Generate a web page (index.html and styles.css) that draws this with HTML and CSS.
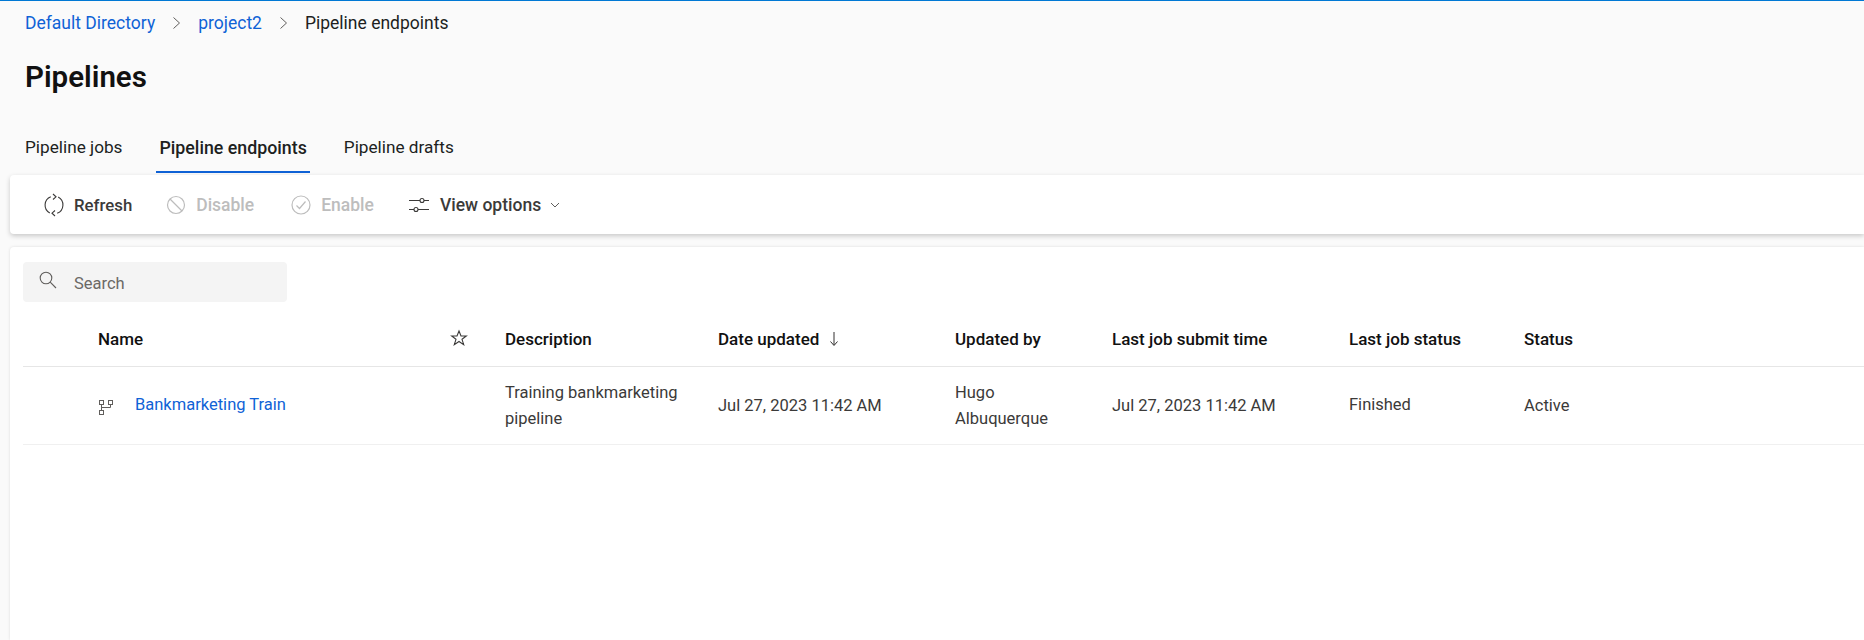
FILE: index.html
```html
<!doctype html>
<html lang="en">
	<head>
		<meta charset="utf-8">
		<title>Pipelines</title>
		<link rel="stylesheet" href="styles.css">
	</head>
	<body>
		<nav class="breadcrumb">
			<a href="#">Default Directory</a>
			<svg class="crumb-sep" width="12" height="16" viewBox="0 0 12 16"><path d="M2.5 2.5 8.5 8l-6 5.500" fill="none" stroke="#605e5c"/></svg>
			<a href="#">project2</a>
			<svg class="crumb-sep" width="12" height="16" viewBox="0 0 12 16"><path d="M2.500 2.500 8.500 8l-6 5.500" fill="none" stroke="#605e5c"/></svg>
			<span>Pipeline endpoints</span>
		</nav>

		<h1 class="title">Pipelines</h1>

		<div class="tabs">
			<a class="tab" href="#">Pipeline jobs</a>
			<a class="tab tab-active" href="#">Pipeline endpoints</a>
			<a class="tab" href="#">Pipeline drafts</a>
		</div>

		<div class="toolbar">
			<button class="tool tool-refresh">
				<svg width="22" height="24" viewBox="0 0 22 24" fill="none" stroke="currentColor" stroke-width="1.100">
					<path d="M7.800 3.700A9 9 0 0 0 6.800 20"/>
					<path d="M14.200 20.300A9 9 0 0 0 15.200 4"/>
					<path d="M10 1 13 3.800 10 6.500"/>
					<path d="M12 17.500 9 20.200 12 23"/>
				</svg>
				Refresh
			</button>
			<button class="tool tool-off">
				<svg width="20" height="20" viewBox="0 0 20 20" fill="none" stroke="currentColor" stroke-width="1.200">
					<circle cx="10" cy="10" r="8.500"/>
					<path d="M4 4l12 12"/>
				</svg>
				Disable
			</button>
			<button class="tool tool-off tool-enable">
				<svg width="20" height="20" viewBox="0 0 20 20" fill="none" stroke="currentColor" stroke-width="1.200">
					<circle cx="10" cy="10" r="9"/>
					<path d="M5.500 10.500 8.500 13.500 14.500 6.500"/>
				</svg>
				Enable
			</button>
			<button class="tool">
				<svg width="22" height="20" viewBox="0 0 22 20" fill="none" stroke="currentColor" stroke-width="1.100">
					<path d="M1 5.500h11M16 5.500h5M1 14.500h5M10 14.500h11"/>
					<circle cx="14" cy="5.500" r="2"/>
					<circle cx="8" cy="14.500" r="2"/>
				</svg>
				View options
				<svg class="chevron" width="10" height="6" viewBox="0 0 10 6"><path d="M1 1l4 4 4-4" fill="none" stroke="#605e5c"/></svg>
			</button>
		</div>

		<section class="card">
			<div class="search">
				<svg width="18" height="18" viewBox="0 0 18 18" fill="none" stroke="#605e5c" stroke-width="1.100">
					<circle cx="7" cy="7" r="5.800"/>
					<path d="M11.200 11.200 17 17"/>
				</svg>
				<span class="search-text">Search</span>
			</div>

			<div class="grid grid-head">
				<div></div>
				<div class="name-head">
					<span>Name</span>
					<svg width="18" height="18" viewBox="0 0 18 18"><path d="M9 2l2 5h5.300l-4.300 3.300 1.700 5.400L9 12.500l-4.700 3.200L6 10.300 1.700 7H7z" fill="none" stroke="#3b3a39" stroke-width="1.100"/></svg>
				</div>
				<div>Description</div>
				<div class="date-head">
					Date updated
					<svg width="10" height="16" viewBox="0 0 10 16"><path d="M5 1v13M1.500 10.500 5 14.500l3.500-4" fill="none" stroke="#323130"/></svg>
				</div>
				<div>Updated by</div>
				<div>Last job submit time</div>
				<div>Last job status</div>
				<div>Status</div>
			</div>

			<div class="grid grid-row">
				<div></div>
				<div class="name-cell">
					<svg class="pipeline-icon" width="16" height="20" viewBox="0 0 16 20" fill="none" stroke="#605e5c">
						<rect x="1.500" y="2.500" width="4" height="4"/>
						<rect x="10.500" y="2.500" width="4" height="4"/>
						<rect x="1.500" y="12.500" width="4" height="4"/>
						<path d="M3.500 6.500v6M3.500 9.500h9v-3"/>
					</svg>
					<a href="#">Bankmarketing Train</a>
				</div>
				<div>Training bankmarketing pipeline</div>
				<div>Jul 27, 2023 11:42 AM</div>
				<div class="updated-by">Hugo Albuquerque</div>
				<div>Jul 27, 2023 11:42 AM</div>
				<div class="job-status">Finished</div>
				<div>Active</div>
			</div>
		</section>
	</body>
</html>
```

FILE: styles.css
```css
* {
	box-sizing: border-box;
}

html, body {
	height: 100%;
}

body {
	margin: 0;
	overflow: hidden;
	background: #fafafa;
	border-top: 1px solid #0078d4;
	color: #201f1e;
	font-family: Roboto, "Open Sans", Arial, sans-serif;
	font-size: 16.500px;
	display: flex;
	flex-direction: column;
}

a {
	color: #0f62d6;
	text-decoration: none;
}

.breadcrumb {
	display: flex;
	align-items: center;
	height: 44px;
	padding-left: 25px;
	font-size: 17.500px;
	color: #201f1e;
}

.crumb-sep {
	margin: 0 15px 0 16px;
}

.title {
	margin: 13px 0 0 25px;
	font-size: 29.500px;
	font-weight: 600;
	line-height: 38px;
	color: #111;
}

.tabs {
	display: flex;
	gap: 31px;
	margin: 32px 0 0 22px;
	height: 45px;
	font-size: 17.200px;
}

.tab {
	color: #201f1e;
	padding: 9px 3px 0;
	height: 100%;
	border-bottom: 2px solid transparent;
}

.tab-active {
	font-size: 17.800px;
	font-weight: 500;
	border-bottom-color: #0f62d6;
}

.toolbar {
	display: flex;
	align-items: center;
	gap: 34px;
	height: 59px;
	margin: 2px 0 0 10px;
	padding-left: 33px;
	background: #fff;
	border-radius: 4px 0 0 4px;
	box-shadow: 0 2px 5px rgba(0, 0, 0, 0.2);
}

.tool {
	display: flex;
	align-items: center;
	gap: 10px;
	padding: 0;
	border: 0;
	background: none;
	color: #3b3a39;
	font-family: inherit;
	font-size: 17.500px;
	font-weight: 500;
}

.tool-refresh {
	gap: 9px;
	font-size: 16.800px;
}

.tool-enable {
	margin-left: 3px;
}

.tool-off {
	color: #bdbdbd;
}

.chevron {
	margin-left: -1px;
}

.card {
	flex: 1;
	margin: 13px 0 0 10px;
	padding: 15px 0 0 13px;
	background: #fff;
	border-radius: 4px 0 0 0;
	box-shadow: 0 0 3px rgba(0, 0, 0, 0.12);
}

.search {
	display: flex;
	align-items: center;
	gap: 17px;
	width: 264px;
	height: 40px;
	padding-left: 16px;
	background: #f4f4f4;
	border-radius: 4px;
	color: #6b6966;
}

.search svg {
	margin-top: -4px;
}

.search-text {
	padding-top: 3px;
}

.grid {
	display: grid;
	grid-template-columns: 75px 407px 213px 237px 157px 237px 175px 1fr;
	align-items: center;
}

.grid-head {
	height: 65px;
	padding-top: 10px;
	font-size: 17px;
	font-weight: 500;
	color: #111;
	border-bottom: 1px solid #e6e6e6;
}

.name-head {
	display: flex;
	justify-content: space-between;
	align-items: center;
	padding-right: 37px;
}

.name-head svg {
	margin-top: -3px;
}

.date-head {
	display: flex;
	align-items: center;
	gap: 10px;
}

.grid-row {
	height: 78px;
	line-height: 26px;
	color: #3b3a39;
	border-bottom: 1px solid #f0f0f0;
}

.grid-row > div {
	padding-right: 20px;
}

.grid-row > .updated-by {
	padding-right: 40px;
}

.name-cell {
	display: flex;
	align-items: center;
	gap: 21px;
	margin-top: -2px;
}

.pipeline-icon {
	margin-top: 6px;
}

.job-status {
	margin-top: -1px;
}
```
